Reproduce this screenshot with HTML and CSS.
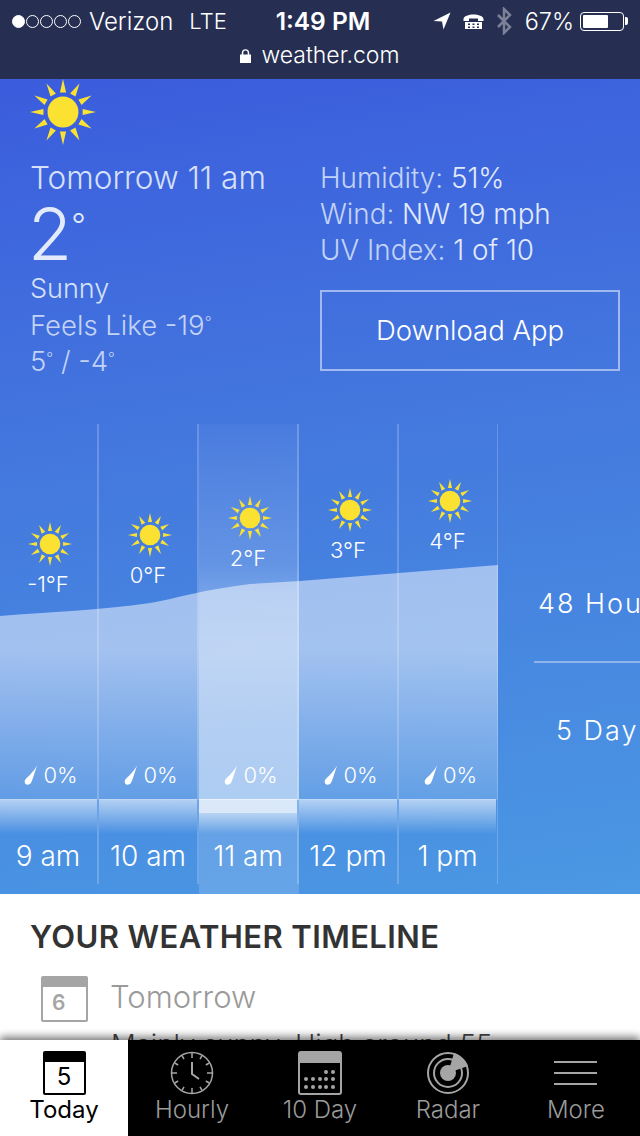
FILE: index.html
```html
<!DOCTYPE html>
<html lang="en">
<head>
    <meta charset="UTF-8">
    <meta name="viewport" content="width=device-width, initial-scale=1.0">
    <title>weather.com</title>
    <link rel="stylesheet" href="styles.css">
</head>
<body>
    <svg class="defs" width="0" height="0">
        <symbol id="sun" viewBox="-32 -32 64 64">
            <circle r="15" fill="#fbe232"/>
            <g fill="#fbe232">
                <path d="M-3 -19 L3 -19 L0 -32 Z"/>
                <path d="M-3 -19 L3 -19 L0 -32 Z" transform="rotate(30)"/>
                <path d="M-3 -19 L3 -19 L0 -32 Z" transform="rotate(60)"/>
                <path d="M-3 -19 L3 -19 L0 -32 Z" transform="rotate(90)"/>
                <path d="M-3 -19 L3 -19 L0 -32 Z" transform="rotate(120)"/>
                <path d="M-3 -19 L3 -19 L0 -32 Z" transform="rotate(150)"/>
                <path d="M-3 -19 L3 -19 L0 -32 Z" transform="rotate(180)"/>
                <path d="M-3 -19 L3 -19 L0 -32 Z" transform="rotate(210)"/>
                <path d="M-3 -19 L3 -19 L0 -32 Z" transform="rotate(240)"/>
                <path d="M-3 -19 L3 -19 L0 -32 Z" transform="rotate(270)"/>
                <path d="M-3 -19 L3 -19 L0 -32 Z" transform="rotate(300)"/>
                <path d="M-3 -19 L3 -19 L0 -32 Z" transform="rotate(330)"/>
            </g>
        </symbol>
        <symbol id="drop" viewBox="0 0 16 24">
            <path d="M15 1 C13 6 11 14 8.500 20 C7 23.500 3 24 1.500 22 C0 20 0.800 17.500 3 15.500 C7 12 12 6 15 1 Z" fill="#fff"/>
        </symbol>
    </svg>

    <header class="topbar">
        <div class="status">
            <div class="status-left">
                <span class="signal"><i class="on"></i><i></i><i></i><i></i><i></i></span>
                <span>Verizon</span>
                <span class="lte">LTE</span>
            </div>
            <div class="clock">1:49 PM</div>
            <div class="status-right">
                <svg width="18" height="18" viewBox="0 0 18 18"><path d="M17.500 0.500 L0.500 9 L9 9.500 L10.500 17.500 Z" fill="#fff"/></svg>
                <svg class="tty" width="21" height="18" viewBox="0 0 21 18">
                    <path d="M0.500 7 C1 1 20 1 20.500 7 L20.500 9 L15 9 L15 6.500 L6 6.500 L6 9 L0.500 9 Z" fill="#fff"/>
                    <path d="M2 10 H19 V17 H2 Z M5 11.500 V13 H7 V11.500 Z M9.500 11.500 V13 H11.500 V11.500 Z M14 11.500 V13 H16 V11.500 Z M5 14.500 V16 H7 V14.500 Z M9.500 14.500 V16 H11.500 V14.500 Z M14 14.500 V16 H16 V14.500 Z" fill="#fff" fill-rule="evenodd"/>
                </svg>
                <svg width="16" height="28" viewBox="0 0 16 28"><path d="M2 8 L14 20 L8 26 L8 2 L14 8 L2 20" fill="none" stroke="#7b8196" stroke-width="2.500"/></svg>
                <span class="pct">67%</span>
                <span class="battery"><span class="battery-fill"></span></span>
            </div>
        </div>
        <div class="address">
            <svg width="11" height="15" viewBox="0 0 11 15"><path d="M0 6.500 H1.800 V4.500 C1.800 0 9.200 0 9.200 4.500 V6.500 H11 V15 H0 Z M3.300 6.500 H7.700 V4.500 C7.700 1.700 3.300 1.700 3.300 4.500 Z" fill="#fff" fill-rule="evenodd"/></svg>
            <span>weather.com</span>
        </div>
    </header>

    <section class="hero">
        <svg class="hero-sun" width="66" height="66"><use href="#sun"/></svg>

        <div class="summary">
            <div class="now">
                <div class="now-title">Tomorrow 11 am</div>
                <div class="now-temp">2<span class="deg">°</span></div>
                <div class="now-sky">Sunny</div>
                <div class="now-line">Feels Like -19<sup>°</sup></div>
                <div class="now-line">5<sup>°</sup> / -4<sup>°</sup></div>
            </div>
            <div class="details">
                <div class="detail">Humidity: <b>51%</b></div>
                <div class="detail">Wind: <b>NW 19 mph</b></div>
                <div class="detail">UV Index: <b>1 of 10</b></div>
                <a class="download">Download App</a>
            </div>
        </div>

        <div class="forecast">
            <svg class="area" width="498" height="376" viewBox="0 0 498 376">
                <defs>
                    <linearGradient id="areaFill" x1="0" y1="0" x2="0" y2="1">
                        <stop offset="0.36" stop-color="#fff" stop-opacity="0.5"/>
                        <stop offset="1" stop-color="#fff" stop-opacity="0.14"/>
                    </linearGradient>
                </defs>
                <path d="M0 192 C50 188 100 186 150 179 C175 175 200 166 250 160 L300 157 L498 141 V376 H0 Z" fill="url(#areaFill)"/>
            </svg>

            <div class="hours">
                <div class="hour">
                    <div class="hour-top" style="padding-top: 98px">
                        <svg class="hour-sun" width="44" height="44"><use href="#sun"/></svg>
                        <div class="hour-temp">-1°F</div>
                    </div>
                    <div class="rain"><svg width="14" height="22"><use href="#drop"/></svg>0%</div>
                    <div class="hour-name">9 am</div>
                </div>
                <div class="hour">
                    <div class="hour-top" style="padding-top: 89px">
                        <svg class="hour-sun" width="44" height="44"><use href="#sun"/></svg>
                        <div class="hour-temp">0°F</div>
                    </div>
                    <div class="rain"><svg width="14" height="22"><use href="#drop"/></svg>0%</div>
                    <div class="hour-name">10 am</div>
                </div>
                <div class="hour active">
                    <div class="hour-top" style="padding-top: 72px">
                        <svg class="hour-sun" width="44" height="44"><use href="#sun"/></svg>
                        <div class="hour-temp">2°F</div>
                    </div>
                    <div class="rain"><svg width="14" height="22"><use href="#drop"/></svg>0%</div>
                    <div class="hour-name">11 am</div>
                </div>
                <div class="hour">
                    <div class="hour-top" style="padding-top: 64px">
                        <svg class="hour-sun" width="44" height="44"><use href="#sun"/></svg>
                        <div class="hour-temp">3°F</div>
                    </div>
                    <div class="rain"><svg width="14" height="22"><use href="#drop"/></svg>0%</div>
                    <div class="hour-name">12 pm</div>
                </div>
                <div class="hour">
                    <div class="hour-top" style="padding-top: 55px">
                        <svg class="hour-sun" width="44" height="44"><use href="#sun"/></svg>
                        <div class="hour-temp">4°F</div>
                    </div>
                    <div class="rain"><svg width="14" height="22"><use href="#drop"/></svg>0%</div>
                    <div class="hour-name">1 pm</div>
                </div>
            </div>

            <div class="ranges">
                <div class="range">48 Hours</div>
                <div class="range five">5 Day</div>
            </div>
        </div>
    </section>

    <section class="timeline">
        <h2>YOUR WEATHER TIMELINE</h2>
        <div class="event">
            <div class="cal-mini"><span>6</span></div>
            <div class="event-day">Tomorrow</div>
        </div>
        <p class="event-text">Mainly sunny. High around 55</p>
    </section>

    <nav class="tabs">
        <a class="tab current">
            <span class="cal-today"><span>5</span></span>
            <span class="tab-label">Today</span>
        </a>
        <a class="tab">
            <svg width="44" height="44" viewBox="0 0 44 44" fill="none" stroke="#a5a5a5" stroke-width="1.500">
                <circle cx="22" cy="22" r="20.500"/>
                <path d="M22 2 V7 M22 37 V42 M2 22 H7 M37 22 H42 M12 4.700 L14 8.200 M32 4.700 L30 8.200 M4.700 12 L8.200 14 M39.300 12 L35.800 14 M4.700 32 L8.200 30 M39.300 32 L35.800 30 M12 39.300 L14 35.800 M32 39.300 L30 35.800"/>
                <path d="M22 11 V23 L29 28" stroke-width="2"/>
            </svg>
            <span class="tab-label">Hourly</span>
        </a>
        <a class="tab">
            <svg width="44" height="44" viewBox="0 0 44 44">
                <rect x="1" y="1" width="42" height="42" rx="2" fill="none" stroke="#a5a5a5" stroke-width="2"/>
                <rect x="1" y="1" width="42" height="11" fill="#a5a5a5"/>
                <g fill="#a5a5a5">
                    <circle cx="28" cy="21" r="2"/><circle cx="35" cy="21" r="2"/>
                    <circle cx="8" cy="28" r="2"/><circle cx="15" cy="28" r="2"/><circle cx="22" cy="28" r="2"/><circle cx="28" cy="28" r="2"/><circle cx="35" cy="28" r="2"/>
                    <circle cx="8" cy="36" r="2"/><circle cx="15" cy="36" r="2"/><circle cx="22" cy="36" r="2"/><circle cx="28" cy="36" r="2"/><circle cx="35" cy="36" r="2"/>
                </g>
            </svg>
            <span class="tab-label">10 Day</span>
        </a>
        <a class="tab">
            <svg width="44" height="44" viewBox="0 0 44 44" fill="none" stroke="#a5a5a5">
                <circle cx="22" cy="22" r="20" stroke-width="2"/>
                <circle cx="22" cy="22" r="14" stroke-width="2"/>
                <circle cx="22" cy="22" r="8" fill="#a5a5a5" stroke="none"/>
                <path d="M22 22 L28 2 C34 4 40 9 42 15 Z" fill="#a5a5a5" stroke="none"/>
            </svg>
            <span class="tab-label">Radar</span>
        </a>
        <a class="tab">
            <svg width="44" height="44" viewBox="0 0 44 44" stroke="#a5a5a5" stroke-width="2">
                <path d="M0 11 H43 M0 22 H43 M0 33 H43"/>
            </svg>
            <span class="tab-label">More</span>
        </a>
    </nav>
</body>
</html>
```

FILE: styles.css
```css
* {
    box-sizing: border-box;
}

body {
    font-family: Inter, "Liberation Sans", sans-serif;
    background-color: #fff;
    display: flex;
    flex-direction: column;
    height: 1136px;
    margin: 0;
    overflow: hidden;
}

.defs {
    display: none;
}

/* status bar and address */
.topbar {
    height: 79px;
    flex: none;
    background-color: #262f52;
    color: #fff;
}

.status {
    display: grid;
    grid-template-columns: 1fr auto 1fr;
    align-items: center;
    height: 42px;
    padding: 0 16px 0 12px;
    font-size: 24px;
    font-weight: 300;
}

.status-left {
    display: flex;
    align-items: center;
    gap: 8px;
}

.signal {
    display: flex;
    gap: 1px;
}

.signal i {
    width: 13px;
    height: 13px;
    border: 1px solid #fff;
    border-radius: 50%;
}

.signal i.on {
    background-color: #fff;
}

.lte {
    margin-left: 8px;
    font-size: 22px;
}

.clock {
    font-size: 24.5px;
    font-weight: 600;
    padding-left: 10px;
}

.status-right {
    display: flex;
    align-items: center;
    justify-content: flex-end;
    gap: 12px;
}

.pct {
    margin-right: -6px;
    margin-left: 1px;
    font-size: 23.5px;
}

.battery {
    position: relative;
    width: 44px;
    height: 19px;
    padding: 2px;
    border: 1px solid #fff;
    border-radius: 4px;
}

.battery::after {
    content: "";
    position: absolute;
    top: 4px;
    right: -5px;
    width: 3px;
    height: 8px;
    background-color: #fff;
    border-radius: 0 2px 2px 0;
}

.battery-fill {
    display: block;
    width: 67%;
    height: 100%;
    background-color: #fff;
    border-radius: 1px;
}

.address {
    display: flex;
    align-items: center;
    justify-content: center;
    gap: 10px;
    height: 26px;
    font-size: 23px;
    font-weight: 300;
}

/* blue forecast panel */
.hero {
    height: 815px;
    flex: none;
    overflow: hidden;
    background: linear-gradient(172deg, #3b5cdd 0%, #4479de 45%, #4b98e3 100%);
    color: #fff;
}

.hero-sun {
    display: block;
    margin: 0 0 0 30px;
}

.summary {
    display: flex;
    padding: 15px 20px 0 31px;
    height: 279px;
}

.now {
    width: 290px;
    margin-left: -1px;
}

.now-title {
    font-size: 31.5px;
    line-height: 36px;
    color: #d5e0f9;
    font-weight: 300;
}

.now-temp {
    font-size: 72px;
    line-height: 74px;
    font-weight: 300;
    color: #e3eafb;
    margin-top: 1px;
    margin-left: -2px;
}

.deg {
    font-size: 32px;
    vertical-align: 23px;
    line-height: 0;
    margin-left: -1px;
}

.now-sky {
    font-size: 27px;
    line-height: 36px;
    color: #d5e0f9;
    font-weight: 300;
}

.now-line {
    font-size: 27.5px;
    line-height: 36px;
    color: #c3d3f6;
    font-weight: 300;
}

.now-line sup {
    font-size: 15px;
    line-height: 0;
    vertical-align: 8px;
}

.details {
    flex: 1;
}

.detail {
    font-size: 27.8px;
    line-height: 36px;
    color: #c3d3f6;
    font-weight: 300;
}

.detail b {
    color: #e3eafb;
    font-weight: 300;
}

.download {
    display: block;
    margin-top: 22px;
    height: 81px;
    line-height: 77px;
    text-align: center;
    font-size: 27.5px;
    font-weight: 300;
    border: 2px solid #a0b9ee;
    color: #fff;
}

/* hourly columns */
.forecast {
    position: relative;
    display: flex;
    height: 470px;
}

.area {
    position: absolute;
    top: 0;
    left: 0;
}

.hours {
    position: relative;
    display: flex;
    flex: none;
    width: 498px;
    margin-left: -1px;
}

.hour {
    position: relative;
    display: flex;
    flex-direction: column;
    width: 100px;
    flex: none;
    text-align: center;
    padding-right: 2px;
}

/* column divider stops short of the panel edge */
.hour::after {
    content: "";
    position: absolute;
    top: 0;
    right: 0;
    bottom: 10px;
    width: 2px;
    background-color: rgba(255, 255, 255, 0.2);
}

.hour:last-child {
    width: 99px;
}

.hour:last-child::after {
    width: 1px;
}

.hour.active {
    background: linear-gradient(180deg, rgba(255, 255, 255, 0.03) 0, rgba(255, 255, 255, 0.16) 140px, rgba(255, 255, 255, 0.26) 170px, rgba(255, 255, 255, 0.48) 376px, rgba(255, 255, 255, 0.15) 376px);
}

.hour-top {
    height: 328px;
}

.hour-sun {
    display: block;
    margin-left: 29px;
}

.hour-temp {
    font-size: 22px;
    line-height: 26px;
    font-weight: 300;
    margin-top: 5px;
}

.rain {
    display: flex;
    align-items: center;
    justify-content: center;
    gap: 5px;
    height: 47px;
    padding-left: 6px;
    font-size: 22px;
    font-weight: 300;
}

.hour-name {
    height: 95px;
    padding-top: 39px;
    margin-top: 1px;
    font-size: 28px;
    line-height: 36px;
    font-weight: 300;
    background: linear-gradient(180deg, rgba(255, 255, 255, 0.6) 0, rgba(255, 255, 255, 0) 35px);
}

.hour.active .hour-name {
    background: linear-gradient(180deg, rgba(255, 255, 255, 0.76) 0, rgba(255, 255, 255, 0.76) 14px, rgba(255, 255, 255, 0.55) 14px, rgba(255, 255, 255, 0) 35px);
}

.ranges {
    position: relative;
    flex: none;
    width: 300px;
    padding-top: 162px;
    padding-left: 37px;
}

.range {
    width: 300px;
    height: 77px;
    text-align: left;
    padding-left: 4px;
    font-size: 27px;
    line-height: 36px;
    font-weight: 300;
    letter-spacing: 2px;
    border-bottom: 2px solid #8fb4ec;
}

.range.five {
    border-bottom: none;
    padding-left: 22px;
    padding-top: 50px;
    height: 90px;
}

/* timeline panel under the forecast */
.timeline {
    flex: 1;
    overflow: hidden;
    padding: 0 31px;
}

.timeline h2 {
    margin: 24px 0 0 -1px;
    font-size: 31px;
    line-height: 38px;
    letter-spacing: 0.4px;
    font-weight: 600;
    color: #333;
}

.event {
    display: flex;
    align-items: center;
    gap: 22px;
    margin: 20px 0 0 10px;
}

.cal-mini {
    width: 47px;
    height: 46px;
    border: 2px solid #a5a5a5;
    border-top-width: 11px;
    border-radius: 2px;
    color: #a5a5a5;
    font-size: 21px;
    font-weight: 600;
    line-height: 32px;
    padding-left: 9px;
}

.event-day {
    font-size: 31px;
    font-weight: 300;
    color: #9a9a9a;
    margin-top: -5px;
}

.event-text {
    margin: 7px 0 0 80px;
    white-space: nowrap;
    font-size: 27.5px;
    line-height: 30px;
    font-weight: 300;
    color: #444;
}

/* bottom tab bar */
.tabs {
    position: relative;
    display: flex;
    flex: none;
    height: 96px;
    background-color: #000;
    box-shadow: 0 -3px 8px rgba(0, 0, 0, 0.55);
}

.tab {
    display: flex;
    flex-direction: column;
    align-items: center;
    width: 128px;
    padding-top: 11px;
    color: #9b9b9b;
}

.tab.current {
    background-color: #fff;
    color: #000;
}

.tab-label {
    font-size: 24px;
    font-weight: 300;
    line-height: 28px;
    margin-top: 1px;
}

.tab.current .tab-label {
    font-weight: 400;
}

.cal-today {
    width: 43px;
    height: 44px;
    border: 2px solid #000;
    border-top-width: 11px;
    border-radius: 2px;
    text-align: center;
    font-size: 24px;
    line-height: 30px;
    font-weight: 400;
}
```
